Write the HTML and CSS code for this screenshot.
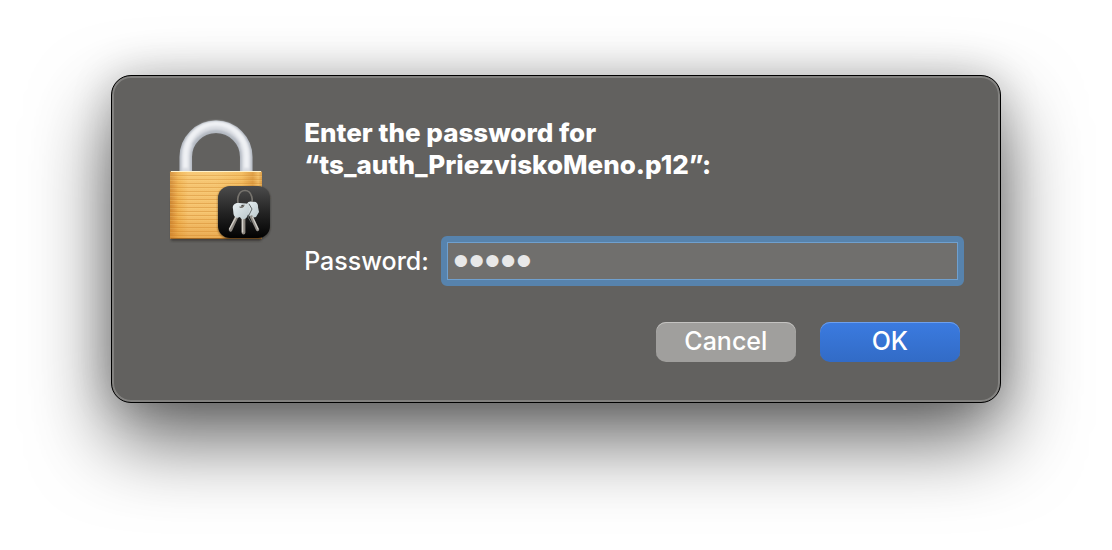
FILE: index.html
```html
<!DOCTYPE html>
<html lang="en">
<head>
<meta charset="utf-8">
<title>Enter password</title>
<link rel="stylesheet" href="styles.css">
</head>
<body>
<main class="desktop">
<form class="dialog" role="dialog" aria-labelledby="dialog-title">
  <svg class="dialog-icon" viewBox="0 0 120 140" aria-hidden="true">
    <defs>
      <linearGradient id="brass" x1="0" x2="1" y1="0" y2="0">
        <stop offset="0" stop-color="#c98432"/><stop offset=".04" stop-color="#dc963f"/><stop offset=".09" stop-color="#eeb050"/><stop offset=".2" stop-color="#f6c471"/><stop offset=".5" stop-color="#f5c470"/><stop offset=".78" stop-color="#f2b759"/><stop offset=".9" stop-color="#d89238"/><stop offset=".96" stop-color="#eeb75f"/><stop offset="1" stop-color="#d2903a"/>
      </linearGradient>
      <linearGradient id="shade" x1="0" x2="0" y1="0" y2="1">
        <stop offset="0" stop-color="#ffdf94" stop-opacity=".2"/><stop offset=".6" stop-color="#e79a35" stop-opacity=".05"/><stop offset="1" stop-color="#d98a2c" stop-opacity=".45"/>
      </linearGradient>
      <pattern id="grooves" width="10" height="4" patternUnits="userSpaceOnUse">
        <rect y="1" width="10" height="1" fill="#c87d22" fill-opacity=".38"/>
        <rect y="2" width="10" height="1" fill="#ffdf91" fill-opacity=".2"/>
      </pattern>
      <linearGradient id="tile" x1="0" x2="0" y1="0" y2="1">
        <stop offset="0" stop-color="#4b4b4b"/><stop offset=".5" stop-color="#242424"/><stop offset="1" stop-color="#020202"/>
      </linearGradient>
      <linearGradient id="keyhead" x1="0" x2="1" y1="0" y2="1">
        <stop offset="0" stop-color="#e9f0f2"/><stop offset="1" stop-color="#bac7cb"/>
      </linearGradient>
      <filter id="soft" x="-20%" y="-20%" width="140%" height="140%"><feGaussianBlur stdDeviation="1.2"/></filter>
      <filter id="smooth" x="-20%" y="-20%" width="140%" height="140%"><feGaussianBlur stdDeviation=".8"/></filter>
    </defs>
    <path d="M11 89H101V131H11Z" fill="#292724" opacity=".55" filter="url(#soft)"/>
    <path d="M25.750 63V47A30.250 30.250 0 0 1 86.250 47V63" fill="none" stroke="#b2b8c1" stroke-width="12.500"/>
    <path d="M25.750 63V47A30.250 30.250 0 0 1 86.250 47V63" fill="none" stroke="#d9dce2" stroke-width="9" filter="url(#smooth)"/>
    <path d="M25.500 58V46A30.500 32.500 0 0 1 86.500 46V58" fill="none" stroke="#eff1f4" stroke-width="5" filter="url(#smooth)"/>
    <path d="M33 35A26 26 0 0 1 79 35" fill="none" stroke="#a3aab3" stroke-width="2" opacity=".6" filter="url(#smooth)"/>
    <rect x="10" y="61" width="92" height="68" rx="1.500" fill="url(#brass)"/>
    <rect x="10" y="63" width="92" height="65" fill="url(#grooves)"/>
    <rect x="10" y="61" width="92" height="68" rx="1.500" fill="url(#shade)"/>
    <path d="M11 61.500H101" stroke="#fff3cd" stroke-width="1.200"/>
    <path d="M11 128.500H101" stroke="#a06623" stroke-width="1"/>
    <rect x="58" y="77" width="52" height="52" rx="12" fill="#181512" opacity=".6" filter="url(#soft)"/>
    <rect x="58" y="76" width="52" height="52" rx="12" fill="url(#tile)"/>
    <g stroke-linecap="round" stroke-linejoin="round">
      <path d="M80 97C75.500 91 78 80.500 85 80.500S94 91 90.500 97" fill="none" stroke="#77746e" stroke-width="1.700"/>
      <path d="M87 94C88 91 91 91 93 92C96 91 98.500 94 98 97L99 102L96 107L91 108L87 103Z" fill="url(#keyhead)"/>
      <path d="M91.500 107L97.500 119.500" stroke="#908c86" stroke-width="3.200"/>
      <path d="M92.500 107L98 119" stroke="#d1d0ca" stroke-width="1.200"/>
      <path d="M77 106L70.500 120" stroke="#8c8780" stroke-width="3.400"/>
      <path d="M76 107L69.500 119" stroke="#d3d0c9" stroke-width="1.400"/>
      <path d="M83.500 107V122.500" stroke="#8c8780" stroke-width="3.800"/>
      <path d="M82.500 108V122" stroke="#d5d3cc" stroke-width="1.500"/>
      <path d="M73 99C72 95 75 92.500 79 93L86 93.500C89.500 94 90.500 97 89.500 101L87 107C85 110 81 110 80 107C77 109 74 107 73.500 104Z" fill="url(#keyhead)"/>
      <path d="M89 94L92 99L88 107L91 112" fill="none" stroke="#606767" stroke-width="1"/>
      <circle cx="82.500" cy="96" r="1.300" fill="#454746"/>
      <path d="M80 97C81 98 83.500 97 84 95" fill="none" stroke="#77746e" stroke-width="1.200"/>
    </g>
  </svg>
  <div class="dialog-body">
    <h1 class="dialog-title" id="dialog-title">Enter the password for<br>“ts_auth_PriezviskoMeno.p12”:</h1>
    <div class="field">
      <label class="field-label" for="password">Password:</label>
      <input class="field-input" id="password" type="password" value="12345">
    </div>
    <div class="actions">
      <button class="button button-cancel" type="button">Cancel</button>
      <button class="button button-ok" type="submit">OK</button>
    </div>
  </div>
</form>
</main>
</body>
</html>
```
FILE: styles.css
```css
* { box-sizing: border-box; }
body {
  margin: 0;
  background: #fff;
  color: #fff;
  font-family: Inter, "Liberation Sans", sans-serif;
  font-size: 25px;
  font-weight: 500;
}
.desktop {
  min-height: 100vh;
  padding: 75px 10%;
  overflow: hidden;
}
.dialog {
  display: flex;
  align-items: flex-start;
  gap: 24px;
  padding: 34px 36px 40px 48px;
  border: 1px solid #000;
  border-radius: 20px;
  background: #62615f;
  box-shadow: inset 0 0 0 2px #82817f, 0 36px 80px rgba(0, 0, 0, .62), 0 0 40px rgba(0, 0, 0, .18);
}
.dialog-icon {
  flex: none;
  width: 120px;
  height: 140px;
}
.dialog-body {
  flex: 1;
  min-width: 0;
  padding-top: 7px;
}
.dialog-title {
  margin: 0;
  font-size: 26px;
  font-weight: 800;
  line-height: 32px;
}
.field {
  display: flex;
  align-items: center;
  gap: 12px;
  margin-top: 55px;
}
.field-label { line-height: 50px; }
.field-input {
  flex: 1;
  min-width: 0;
  height: 50px;
  padding: 0 6px;
  border: 6px solid #5783ad;
  border-radius: 6px;
  outline: 0;
  background: #706f6d;
  box-shadow: inset 0 0 0 1px #6fa0cf;
  color: #e8e8e8;
  font-family: "Liberation Sans", sans-serif;
  font-size: 45px;
}
.actions {
  display: flex;
  justify-content: flex-end;
  gap: 24px;
  margin-top: 36px;
  padding-right: 4px;
}
.button {
  width: 140px;
  height: 40px;
  padding: 0 0 2px;
  border: 0;
  border-radius: 10px;
  color: #fff;
  font: inherit;
}
.button-cancel {
  background: #a09f9d;
  box-shadow: inset 0 1px #c4c3c1;
}
.button-ok {
  background: linear-gradient(#3b7be0, #326bc6);
  box-shadow: inset 0 1px #6da0ee;
}
```
